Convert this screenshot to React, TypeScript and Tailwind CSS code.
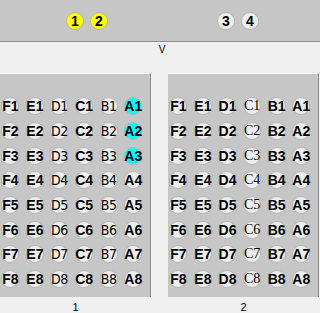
import React from "react";

const cols = ["F", "E", "D", "C", "B", "A"];
const rows = [1, 2, 3, 4, 5, 6, 7, 8];

function Well({ label, color, fontClass }: { label: string; color: string; fontClass: string }) {
  return (
    <div className="relative flex items-center justify-center">
      <div className={`h-[18px] w-[18px] rounded-full border border-[#b4b4b4] ${color}`} />
      <span className={`absolute inset-0 flex items-center justify-center text-[14px] leading-none text-black ${fontClass}`}>
        {label}
      </span>
    </div>
  );
}

function Plate({ n, cyan, fonts }: { n: string; cyan: string[]; fonts: Record<string, string> }) {
  return (
    <div className="flex flex-col items-center">
      <div className="h-[224px] w-[151px] overflow-hidden border-t border-t-[#fafafa] border-r border-r-[#8c8c8c] bg-[#c6c6c6] pt-[20px]">
        <div className="ml-[-2px] grid grid-cols-[repeat(6,24.6px)] auto-rows-[24.7px]">
          {rows.map((r) =>
            cols.map((c) => {
              const id = `${c}${r}`;
              return (
                <Well
                  key={id}
                  label={id}
                  color={cyan.includes(id) ? "bg-[#00ffff]" : "bg-[#eeeeee]"}
                  fontClass={fonts[c] ?? "font-['Liberation_Sans',sans-serif] font-bold"}
                />
              );
            })
          )}
        </div>
      </div>
      <div className="mt-[3px] font-['Liberation_Sans',sans-serif] text-[11px] leading-[14px] text-black">{n}</div>
    </div>
  );
}

function Top({ label, color }: { label: string; color: string }) {
  return (
    <div className={`flex h-[18px] w-[18px] items-center justify-center rounded-full border border-[#b4b4b4] ${color}`}>
      <span className="font-['Liberation_Sans',sans-serif] text-[14px] font-bold leading-none text-black">{label}</span>
    </div>
  );
}

export default function App() {
  return (
    <div className="h-[313px] w-[320px] overflow-hidden bg-[#f0f0f0] font-['Liberation_Sans',sans-serif]">
      <div className="flex h-[42px] items-center border-b border-b-[#8c8c8c] bg-[#c6c6c6]">
        <div className="ml-[66px] flex gap-[6px]">
          <Top label="1" color="bg-[#ffff00]" />
          <Top label="2" color="bg-[#ffff00]" />
        </div>
        <div className="ml-[109px] flex gap-[6px]">
          <Top label="3" color="bg-[#eeeeee]" />
          <Top label="4" color="bg-[#eeeeee]" />
        </div>
      </div>
      <div className="flex h-[16px] items-center justify-center pl-[4px] text-[10px] leading-none text-black">V</div>
      <div className="mt-[15px] flex gap-[17px]">
        <Plate
          n="1"
          cyan={["A1", "A2", "A3"]}
          fonts={{
            D: "font-['DejaVu_Sans_Condensed',sans-serif] font-normal tracking-[-0.3px]",
            B: "font-['DejaVu_Sans_Condensed',sans-serif] font-normal tracking-[-0.3px]",
          }}
        />
        <Plate
          n="2"
          cyan={[]}
          fonts={{
            C: "font-['Liberation_Serif',serif] font-normal",
          }}
        />
      </div>
    </div>
  );
}
